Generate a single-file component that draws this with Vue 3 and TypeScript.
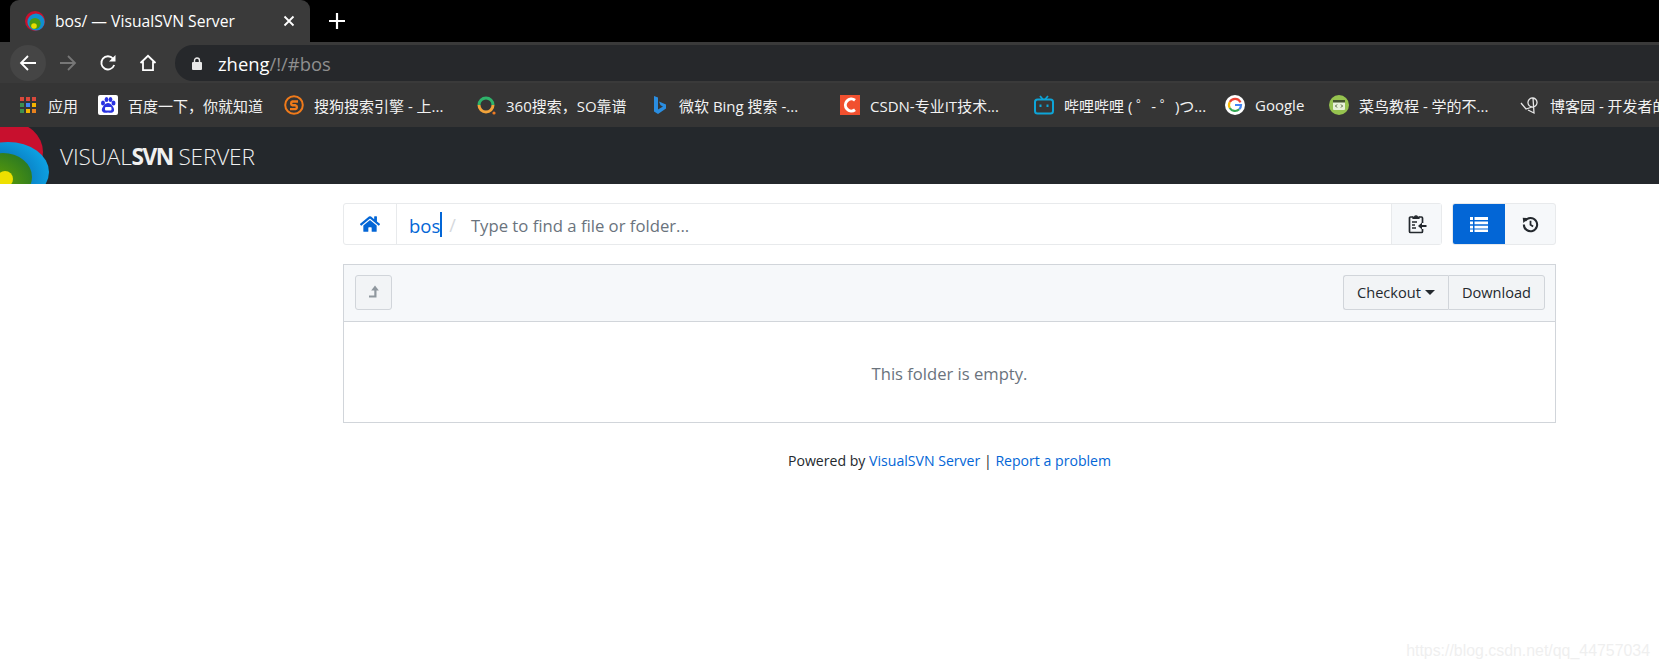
<script setup lang="ts">
interface Bookmark { name: string; label: string; width: number }
const bookmarks: Bookmark[] = [
  { name: 'apps', label: '应用', width: 80 },
  { name: 'baidu', label: '百度一下，你就知道', width: 186 },
  { name: 'sogou', label: '搜狗搜索引擎 - 上...', width: 192 },
  { name: 'q360', label: '360搜索，SO靠谱', width: 173 },
  { name: 'bing', label: '微软 Bing 搜索 -...', width: 191 },
  { name: 'csdn', label: 'CSDN-专业IT技术...', width: 194 },
  { name: 'bili', label: '哔哩哔哩 ( ゜- ゜)つ...', width: 191 },
  { name: 'google', label: 'Google', width: 104 },
  { name: 'runoob', label: '菜鸟教程 - 学的不...', width: 191 },
  { name: 'cnblogs', label: '博客园 - 开发者的网站', width: 220 }
]
</script>

<template>
  <div class="page">
    <div class="tabstrip">
      <div class="tab">
        <svg class="favicon" viewBox="0 0 20 20" width="20" height="20">
          <circle cx="10" cy="10" r="10" fill="#c8102e" />
          <circle cx="11" cy="11" r="8.6" fill="#0f8fd0" />
          <circle cx="10" cy="12.5" r="5.6" fill="#4c9a10" />
          <circle cx="9" cy="15" r="2.8" fill="#e8dc00" />
        </svg>
        <span class="tab-title">bos/ — VisualSVN Server</span>
        <svg class="tab-close" viewBox="0 0 12 12" width="12" height="12">
          <path d="M1.5 1.5l9 9M10.5 1.5l-9 9" stroke="#fff" stroke-width="1.8" />
        </svg>
      </div>
      <svg class="newtab" viewBox="0 0 16 16" width="16" height="16">
        <path d="M8 0v16M0 8h16" stroke="#fff" stroke-width="2.2" />
      </svg>
    </div>

    <div class="toolbar">
      <div class="nav nav-back">
        <svg viewBox="0 0 18 18" width="18" height="18">
          <path d="M17 9H2M9 2L2 9l7 7" fill="none" stroke="#fff" stroke-width="1.8" />
        </svg>
      </div>
      <div class="nav">
        <svg viewBox="0 0 18 18" width="18" height="18">
          <path d="M1 9h15M9 2l7 7-7 7" fill="none" stroke="#777" stroke-width="1.8" />
        </svg>
      </div>
      <div class="nav">
        <svg viewBox="0 0 18 18" width="18" height="18">
          <path d="M15.2 11A6.6 6.6 0 1 1 14 4.6" fill="none" stroke="#fff" stroke-width="1.8" />
          <path d="M16.5 1v6.5H10z" fill="#fff" />
        </svg>
      </div>
      <div class="nav">
        <svg viewBox="0 0 18 18" width="18" height="18">
          <path d="M1.5 9L9 1.8 16.500 9M4 7.500V16.200h10V7.500" fill="none" stroke="#fff" stroke-width="1.8" />
        </svg>
      </div>
      <div class="omnibox">
        <svg class="lock" viewBox="0 0 10 13" width="10" height="13">
          <rect x="0" y="5" width="10" height="8" rx="1" fill="#e8e8e8" />
          <path d="M2.500 5.500V3.500a2.500 2.500 0 0 1 5 0v2" fill="none" stroke="#e8e8e8" stroke-width="1.400" />
        </svg>
        <span class="url-host">zheng</span><span class="url-rest">/!/#bos</span>
      </div>
    </div>

    <div class="bookmarks">
      <div
        v-for="b in bookmarks"
        :key="b.name"
        class="bookmark"
        :style="{ flexBasis: b.width + 'px' }"
      >
        <svg class="bm-icon" viewBox="0 0 20 20" width="20" height="20">
          <template v-if="b.name === 'apps'">
            <rect x="2" y="2" width="4" height="4" fill="#d9483b" />
            <rect x="8" y="2" width="4" height="4" fill="#d9483b" />
            <rect x="14" y="2" width="4" height="4" fill="#d9483b" />
            <rect x="2" y="8" width="4" height="4" fill="#3f8f4f" />
            <rect x="8" y="8" width="4" height="4" fill="#4285f4" />
            <rect x="14" y="8" width="4" height="4" fill="#f4b400" />
            <rect x="2" y="14" width="4" height="4" fill="#3f8f4f" />
            <rect x="8" y="14" width="4" height="4" fill="#f4b400" />
            <rect x="14" y="14" width="4" height="4" fill="#e8821e" />
          </template>
          <template v-else-if="b.name === 'baidu'">
            <rect width="20" height="20" rx="2" fill="#fff" />
            <ellipse cx="5" cy="8" rx="2" ry="2.600" fill="#2932e1" />
            <ellipse cx="8.500" cy="4.500" rx="1.900" ry="2.500" fill="#2932e1" />
            <ellipse cx="12.500" cy="4.500" rx="1.900" ry="2.500" fill="#2932e1" />
            <ellipse cx="15.500" cy="8" rx="2" ry="2.600" fill="#2932e1" />
            <path d="M10 8c-3 0-7 5-6 8 1 2 4 2 6 1.500 2 .5 5 .5 6-1.500 1-3-3-8-6-8z" fill="#2932e1" />
            <rect x="7" y="12" width="6.500" height="3.500" rx="1" fill="#fff" />
          </template>
          <template v-else-if="b.name === 'sogou'">
            <circle cx="10" cy="10" r="8.800" fill="none" stroke="#f07a1a" stroke-width="2" />
            <path d="M14 6.500H8.500a2 2 0 0 0 0 3.800h3a2 2 0 0 1 0 3.800H6" fill="none" stroke="#f07a1a" stroke-width="2.400" />
          </template>
          <template v-else-if="b.name === 'q360'">
            <path d="M3 10a7 7 0 0 1 14 0" fill="none" stroke="#2fb36b" stroke-width="3" />
            <path d="M17 10a7 7 0 0 1-14 0" fill="none" stroke="#f2a33a" stroke-width="3" />
            <circle cx="18" cy="18" r="1.600" fill="#ee7a22" />
          </template>
          <template v-else-if="b.name === 'bing'">
            <path d="M5 1l4 1.500v12l5-3-2.500-1.200L10 6.500 17 9.500v4L9 19l-4-2.500z" fill="#2a8de0" />
          </template>
          <template v-else-if="b.name === 'csdn'">
            <rect width="20" height="20" fill="#f1502f" />
            <path d="M15 5.200A6 6 0 1 0 15 14.800" fill="none" stroke="#fff" stroke-width="3" />
          </template>
          <template v-else-if="b.name === 'bili'">
            <rect x="1" y="4.500" width="18" height="14" rx="2.500" fill="none" stroke="#0ea5d8" stroke-width="2" />
            <path d="M6 1l3 3.500M14 1l-3 3.500" stroke="#0ea5d8" stroke-width="1.800" />
            <path d="M6.500 9.500v2.500M13.500 9.500v2.500" stroke="#0ea5d8" stroke-width="2" />
          </template>
          <template v-else-if="b.name === 'google'">
            <circle cx="10" cy="10" r="10" fill="#fff" />
            <path d="M15.500 7.400A6 6 0 0 0 4.800 7" fill="none" stroke="#ea4335" stroke-width="2.200" />
            <path d="M4.800 7a6 6 0 0 0 0 6" fill="none" stroke="#fbbc05" stroke-width="2.200" />
            <path d="M4.800 13a6 6 0 0 0 9.400 1.300" fill="none" stroke="#34a853" stroke-width="2.200" />
            <path d="M14.200 14.300A6 6 0 0 0 16 10h-6" fill="none" stroke="#4285f4" stroke-width="2.200" />
          </template>
          <template v-else-if="b.name === 'runoob'">
            <circle cx="10" cy="10" r="10" fill="#96c34f" />
            <rect x="4" y="5" width="12" height="10" rx="1" fill="#e8f2d8" />
            <rect x="4" y="5" width="12" height="2.500" fill="#44552f" />
            <path d="M8 9.500L6.500 11 8 12.500M12 9.500l1.500 1.500-1.500 1.500" fill="none" stroke="#44552f" stroke-width="1" />
          </template>
          <template v-else>
            <path d="M1 8l5 6 6-2M12 12a4.500 4.500 0 1 1 1-9 4.500 4.500 0 0 1-1 9zM13 3l1 15-6-3" fill="none" stroke="#e6e6e6" stroke-width="1.300" />
          </template>
        </svg>
        <span class="bm-label">{{ b.label }}</span>
      </div>
    </div>

    <header class="appbar">
      <svg class="logo" viewBox="0 0 60 57" width="60" height="57">
        <defs>
          <radialGradient id="logo-blue" cx="0.3" cy="0.6" r="0.7">
            <stop offset="0.6" stop-color="#0a7fc4" />
            <stop offset="1" stop-color="#0d9fe0" />
          </radialGradient>
          <radialGradient id="logo-green" cx="0.3" cy="0.7" r="0.75">
            <stop offset="0.3" stop-color="#5a9a08" />
            <stop offset="1" stop-color="#2f7d20" />
          </radialGradient>
        </defs>
        <ellipse cx="10" cy="25" rx="33" ry="30" fill="#c8102e" />
        <ellipse cx="8" cy="45" rx="41" ry="30" fill="url(#logo-blue)" />
        <ellipse cx="3" cy="50" rx="29" ry="24" fill="url(#logo-green)" />
        <circle cx="5" cy="52" r="8" fill="#eee000" />
      </svg>
      <div class="brand"><span class="brand-light">VISUAL</span><b>SVN</b><span class="brand-light"> SERVER</span></div>
    </header>

    <main class="content">
      <div class="search-row">
        <div class="search">
          <div class="search-home">
            <svg viewBox="0 0 576 512" width="20" height="18">
              <path fill="#0366d6" d="M280.37 148.26L96 300.11V464a16 16 0 0 0 16 16l112.06-.29a16 16 0 0 0 15.92-16V368a16 16 0 0 1 16-16h64a16 16 0 0 1 16 16v95.64a16 16 0 0 0 16 16.05L464 480a16 16 0 0 0 16-16V300L295.67 148.26a12.19 12.19 0 0 0-15.3 0zM571.6 251.47L488 182.56V44.05a12 12 0 0 0-12-12h-56a12 12 0 0 0-12 12v72.61L318.47 43a48 48 0 0 0-61 0L4.34 251.47a12 12 0 0 0-1.6 16.9l25.5 31A12 12 0 0 0 45.15 301l235.22-193.74a12.19 12.19 0 0 1 15.3 0L530.9 301a12 12 0 0 0 16.9-1.6l25.5-31a12 12 0 0 0-1.7-16.93z" />
            </svg>
          </div>
          <div class="search-field">
            <span class="crumb">bos</span><span class="caret"></span>
            <span class="slash">/</span>
            <span class="placeholder">Type to find a file or folder...</span>
          </div>
          <div class="search-copy">
            <svg viewBox="0 0 20 20" width="20" height="20">
              <path d="M6 3H3.500a1 1 0 0 0-1 1v13.500a1 1 0 0 0 1 1h11a1 1 0 0 0 1-1V15M15.500 9V4a1 1 0 0 0-1-1H12" fill="none" stroke="#24292e" stroke-width="1.700" />
              <path d="M6 4.500V3h1.500a1.600 1.600 0 0 1 3 0H12v1.500z" fill="#24292e" stroke="#24292e" stroke-width="1.200" />
              <path d="M5 8h5M5 11h3M5 14h4" stroke="#24292e" stroke-width="1.400" />
              <path d="M19.500 12H13" stroke="#24292e" stroke-width="2" />
              <path d="M15 8.500L11 12l4 3.500z" fill="#24292e" />
            </svg>
          </div>
        </div>
        <div class="toggle">
          <div class="toggle-btn active">
            <svg viewBox="0 0 18 16" width="18" height="16">
              <path fill="#fff" d="M0 1h3v3H0zM4.500 1H18v3H4.500zM0 5.500h3v2.800H0zM4.500 5.500H18v2.800H4.500zM0 9.800h3v2.600H0zM4.500 9.800H18v2.600H4.500zM0 13.500h3V16H0zM4.500 13.500H18V16H4.500z" />
            </svg>
          </div>
          <div class="toggle-btn">
            <svg viewBox="0 0 18 18" width="17" height="17">
              <path d="M3.200 5.200A7 7 0 1 1 2 9" fill="none" stroke="#24292e" stroke-width="2.200" />
              <path d="M0.800 1.800l6 .6-5.400 5z" fill="#24292e" />
              <path d="M9 5v4.400l2.800 1.800" fill="none" stroke="#24292e" stroke-width="1.900" />
            </svg>
          </div>
        </div>
      </div>

      <section class="panel">
        <div class="panel-head">
          <button class="btn btn-up" type="button">
            <svg viewBox="0 0 10 14" width="10" height="14">
              <path d="M0 11.500h6.400V4.500" fill="none" stroke="#8f979e" stroke-width="2.200" />
              <path d="M6 .5L9.800 5.500H2.200z" fill="#8f979e" />
            </svg>
          </button>
          <div class="btn-group">
            <button class="btn" type="button">Checkout <i class="tri"></i></button>
            <button class="btn" type="button">Download</button>
          </div>
        </div>
        <div class="panel-body">This folder is empty.</div>
      </section>

      <footer class="foot">
        Powered by <a class="link">VisualSVN Server</a> | <a class="link">Report a problem</a>
      </footer>
    </main>

    <div class="watermark">https://blog.csdn.net/qq_44757034</div>
  </div>
</template>

<style>
html, body { margin: 0; background: #fff; overflow: hidden; }
</style>

<style scoped>
.page {
  position: relative;
  height: 670px;
  overflow: hidden;
  font-family: "Open Sans", "Noto Sans CJK SC", sans-serif;
  color: #24292e;
}
.tabstrip {
  height: 42px;
  background: #000;
  display: flex;
  align-items: flex-end;
  padding-left: 10px;
}
.tab {
  width: 300px;
  height: 42px;
  box-sizing: border-box;
  background: #3a3a3a;
  border-radius: 9px 9px 0 0;
  display: flex;
  align-items: center;
  padding: 0 15px 0 15px;
  color: #fff;
}
.favicon { flex: none; margin-right: 10px; }
.tab-title { flex: 1; font-size: 15.7px; white-space: nowrap; }
.tab-close { flex: none; }
.newtab { margin: 0 0 13px 19px; }
.toolbar {
  height: 41px;
  background: #3a3a3a;
  display: flex;
  align-items: center;
  padding-left: 10px;
}
.nav {
  width: 36px;
  height: 36px;
  margin-right: 4px;
  border-radius: 50%;
  display: flex;
  align-items: center;
  justify-content: center;
  flex: none;
}
.nav-back { background: #454545; }
.omnibox {
  flex: 1;
  height: 36px;
  box-sizing: border-box;
  margin-left: 5px;
  background: #26282b;
  border-radius: 18px 0 0 18px;
  display: flex;
  align-items: center;
  padding: 2px 0 0 17px;
  font-size: 18.4px;
}
.lock { margin-right: 16px; }
.url-host { color: #fff; }
.url-rest { color: #8f8f8f; }
.bookmarks {
  height: 44px;
  background: #353535;
  display: flex;
  align-items: center;
  padding-left: 18px;
  overflow: hidden;
}
.bookmark {
  flex: 0 0 auto;
  display: flex;
  align-items: center;
  gap: 10px;
  color: #f2f2f2;
  font-size: 15px;
  white-space: nowrap;
}
.bm-icon { flex: none; }
.appbar {
  height: 57px;
  background: #24282c;
  display: flex;
  align-items: center;
  overflow: hidden;
}
.logo { flex: none; }
.brand {
  color: #f0f0f0;
  font-family: "Open Sans", sans-serif;
  font-size: 22.7px;
  letter-spacing: -0.2px;
  white-space: pre;
  padding-top: 2px;
}
.brand-light { font-weight: 300; }
.brand b { font-weight: 700; letter-spacing: -1.5px; }
.content {
  width: 1213px;
  margin-left: 343px;
  padding-top: 19px;
}
.search-row { display: flex; gap: 10px; height: 42px; }
.search {
  flex: 1;
  display: flex;
  box-sizing: border-box;
  border: 1px solid #e8eaec;
  border-radius: 3px;
}
.search-home {
  flex: none;
  width: 52px;
  border-right: 1px solid #e8eaec;
  display: flex;
  align-items: center;
  justify-content: center;
}
.search-field {
  flex: 1;
  display: flex;
  align-items: center;
  padding: 2px 0 0 12px;
  font-size: 16.7px;
}
.crumb { color: #0366d6; font-size: 18.5px; }
.caret { width: 2px; height: 25px; background: #0366d6; margin-top: -2px; }
.slash { color: #d5d8dc; margin: 0 15px 0 7px; font-size: 18px; }
.placeholder { color: #6a737d; }
.search-copy {
  flex: none;
  width: 49px;
  background: #f6f8fa;
  border-left: 1px solid #e8eaec;
  display: flex;
  align-items: center;
  justify-content: center;
}
.toggle {
  flex: none;
  width: 104px;
  display: flex;
  box-sizing: border-box;
  border-radius: 3px;
  overflow: hidden;
  background: #f6f8fa;
  border: 1px solid #e8eaec;
}
.toggle-btn {
  flex: 1;
  display: flex;
  align-items: center;
  justify-content: center;
}
.toggle-btn.active { background: #0366d6; margin: -1px 0 -1px -1px; flex: 0 0 53px; }
.panel {
  margin-top: 19px;
  height: 159px;
  box-sizing: border-box;
  border: 1px solid #d1d5da;
  display: flex;
  flex-direction: column;
}
.panel-head {
  height: 57px;
  box-sizing: border-box;
  flex: none;
  background: #f6f8fa;
  border-bottom: 1px solid #d1d5da;
  display: flex;
  align-items: center;
  justify-content: space-between;
  padding: 0 10px 2px 11px;
}
.btn {
  height: 35px;
  box-sizing: border-box;
  border: 1px solid #d1d5da;
  background: #f2f4f6;
  border-radius: 3px;
  font: 14.6px "Open Sans", sans-serif;
  color: #24292e;
  padding: 0 12px;
  display: inline-flex;
  align-items: center;
  justify-content: center;
}
.btn-up { width: 37px; padding: 0; }
.btn-group { display: flex; }
.btn-group .btn:first-child { width: 105px; padding: 0; border-right: 0; border-radius: 3px 0 0 3px; gap: 4px; }
.btn-group .btn:last-child { width: 97px; padding: 0; border-radius: 0 3px 3px 0; }
.tri {
  width: 0;
  height: 0;
  border-left: 5px solid transparent;
  border-right: 5px solid transparent;
  border-top: 5px solid #24292e;
}
.panel-body {
  flex: 1;
  display: flex;
  align-items: center;
  justify-content: center;
  color: #6a737d;
  font-size: 16.6px;
  padding-top: 2px;
}
.foot {
  margin-top: 28px;
  text-align: center;
  font-size: 14.1px;
  line-height: 20px;
}
.link { color: #0366d6; }
.watermark {
  position: absolute;
  right: 9px;
  top: 642px;
  color: #efefef;
  font: 15.9px "Liberation Sans", sans-serif;
}
</style>
